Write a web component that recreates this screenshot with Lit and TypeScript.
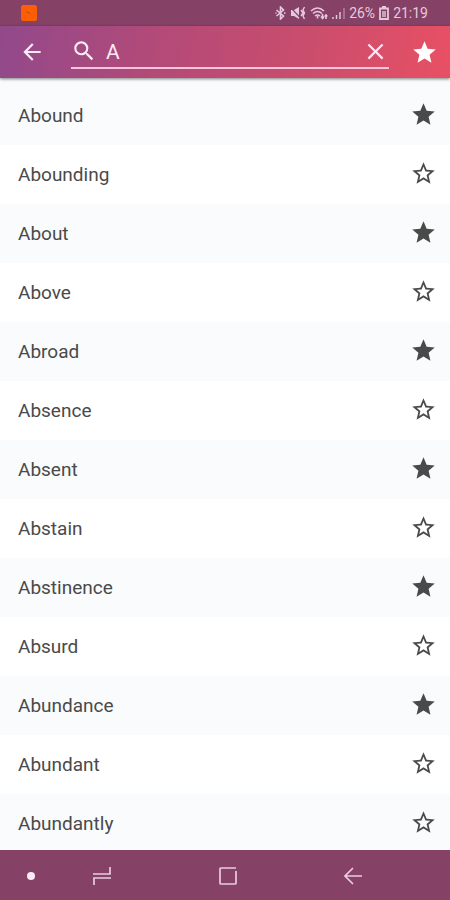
import { LitElement, html, css, svg } from "lit";
import { customElement, state } from "lit/decorators.js";

interface Word {
  name: string;
  starred: boolean;
}

const STAR =
  "M12 17.27 18.18 21l-1.64-7.03L22 9.24l-7.19-.61L12 2 9.19 8.63 2 9.24l5.46 4.73L5.82 21z";
const STAR_OUTLINE =
  "M22 9.24l-7.19-.62L12 2 9.19 8.63 2 9.24l5.46 4.73L5.82 21 12 17.27 18.18 21l-1.63-7.03L22 9.24zM12 15.4l-3.76 2.27 1-4.28-3.32-2.88 4.38-.38L12 6.1l1.71 4.04 4.38.38-3.32 2.88 1 4.28L12 15.4z";
const BACK = "M20 11H7.83l5.59-5.59L12 4l-8 8 8 8 1.41-1.41L7.83 13H20v-2z";
const SEARCH =
  "M15.5 14h-.79l-.28-.27A6.47 6.47 0 0 0 16 9.5 6.5 6.5 0 1 0 9.5 16c1.61 0 3.09-.59 4.23-1.57l.27.28v.79l5 4.99L20.49 19l-4.99-5zm-6 0C7.01 14 5 11.99 5 9.5S7.01 5 9.5 5 14 7.01 14 9.5 11.99 14 9.5 14z";
const CLOSE =
  "M19 6.41 17.59 5 12 10.59 6.41 5 5 6.41 10.59 12 5 17.59 6.41 19 12 13.41 17.59 19 19 17.59 13.41 12z";

const icon = (d: string, size: number) =>
  html`<svg class="icon" viewBox="0 0 24 24" width=${size} height=${size} aria-hidden="true">
    ${svg`<path d=${d}></path>`}
  </svg>`;

@customElement("app-root")
export class AppRoot extends LitElement {
  @state() private query = "A";

  @state() private words: Word[] = [
    { name: "Abound", starred: true },
    { name: "Abounding", starred: false },
    { name: "About", starred: true },
    { name: "Above", starred: false },
    { name: "Abroad", starred: true },
    { name: "Absence", starred: false },
    { name: "Absent", starred: true },
    { name: "Abstain", starred: false },
    { name: "Abstinence", starred: true },
    { name: "Absurd", starred: false },
    { name: "Abundance", starred: true },
    { name: "Abundant", starred: false },
    { name: "Abundantly", starred: false },
  ];

  static styles = css`
    :host {
      display: flex;
      flex-direction: column;
      height: 100vh;
      font-family: Roboto, "Liberation Sans", sans-serif;
      background: #ffffff;
      color: #4a4a4a;
    }
    * {
      box-sizing: border-box;
    }
    button {
      display: flex;
      align-items: center;
      justify-content: center;
      padding: 0;
      border: 0;
      background: none;
      color: inherit;
      font: inherit;
      cursor: pointer;
    }
    svg {
      display: block;
      flex: none;
    }
    .icon {
      fill: currentColor;
    }
    .status {
      display: flex;
      flex: none;
      align-items: center;
      justify-content: space-between;
      height: 26px;
      padding: 0 22px 0 21px;
      background: #864167;
      color: #e6c9dc;
      font-size: 14px;
      line-height: 16px;
    }
    .indicators {
      display: flex;
      align-items: center;
      gap: 4px;
    }
    .bar {
      display: flex;
      flex: none;
      align-items: center;
      height: 52px;
      padding-right: 12px;
      background: linear-gradient(100deg, #91498b 0%, #b34a78 35%, #ca4d6d 68%, #e85064 100%);
      box-shadow: 0 1px 3px rgba(0, 0, 0, 0.5);
      color: #fdeaf6;
      z-index: 1;
    }
    .back {
      width: 63px;
      height: 52px;
    }
    .search {
      display: flex;
      flex: 1;
      align-items: center;
      gap: 9px;
      min-width: 0;
      height: 34px;
      margin: 0 22px 0 8px;
      border-bottom: 2px solid #f7c6dc;
    }
    .search input {
      flex: 1;
      min-width: 0;
      padding: 2px 0 0;
      border: 0;
      outline: 0;
      background: none;
      color: inherit;
      font: 21px/24px Roboto, "Liberation Sans", sans-serif;
    }
    .favorites {
      color: #ffffff;
    }
    main {
      flex: 1;
      min-height: 0;
      overflow-y: auto;
      scrollbar-width: none;
      background: linear-gradient(#f9fbfd 8px, #ffffff 8px);
    }
    .words {
      margin: 0;
      padding: 8px 0 0;
      list-style: none;
    }
    .word {
      display: flex;
      align-items: center;
      justify-content: space-between;
      height: 59px;
      padding: 0 13px 0 18px;
      font-size: 19px;
      line-height: 24px;
    }
    .word:nth-child(odd) {
      background: #f9fbfd;
    }
    .word button {
      padding-bottom: 2px;
    }
    .nav {
      display: flex;
      flex: none;
      align-items: center;
      height: 50px;
      padding-top: 2px;
      background: #864167;
      color: #eccbe2;
    }
    .nav svg {
      fill: none;
      stroke: currentColor;
      stroke-width: 1.7;
    }
    .nav button {
      flex: 2;
      height: 48px;
    }
    .nav .pin {
      flex: none;
      width: 61px;
    }
    .nav .pin svg {
      fill: #fdeaf6;
      stroke: none;
    }
    .nav .keys {
      display: flex;
      flex: 1;
      margin: 0 34px 0 -22px;
    }
  `;

  private toggle(index: number) {
    this.words = this.words.map((w, i) => (i === index ? { ...w, starred: !w.starred } : w));
  }

  private renderStatus() {
    return html`<div class="status">
      <svg width="16" height="16" viewBox="0 0 16 16" aria-hidden="true">
        <rect width="16" height="16" rx="2" fill="#fb5e04"></rect>
        <path d="M5 6l2 2h2" fill="none" stroke="#b54a1c"></path>
      </svg>
      <div class="indicators">
        <svg width="11" height="14" viewBox="0 0 11 14" fill="none" stroke="currentColor" stroke-width="1.6" aria-hidden="true">
          <path d="M1.500 4l7 6-3 3V1l3 3-7 6"></path>
          <path d="M0.500 7h1M9 7h1.500"></path>
        </svg>
        <svg width="16" height="14" viewBox="0 0 16 14" fill="currentColor" aria-hidden="true">
          <path d="M1 4h3l5-3v12L4 10H1z"></path>
          <path d="M0 1l11 11.500" fill="none" stroke="#864167" stroke-width="1.2"></path>
          <path d="M11 4l2 3-2 3M14.500 1l-1.500 3 1.500 3-1.500 3 1.500 3" fill="none" stroke="currentColor" stroke-width="1.4"></path>
        </svg>
        <svg width="18" height="14" viewBox="0 0 18 14" fill="none" stroke="currentColor" stroke-width="1.6" aria-hidden="true">
          <path d="M1 5q6.500-6 13 0M3 7.500q4.500-4 9 0M5 10q2.500-2 5 0"></path>
          <path d="M7.500 10v2.500M12.500 8v4M11 10.500l1.500 2 1.500-2M16 13V9M14.700 10.500L16 9l1.300 1.500"></path>
        </svg>
        <svg width="13" height="14" viewBox="0 0 13 14" stroke="currentColor" stroke-width="1.4" aria-hidden="true">
          <path d="M1 13v-2M4.500 13V9M8 13V6"></path>
          <path d="M12 13V2" opacity="0.5"></path>
        </svg>
        <span>26%</span>
        <svg width="10" height="14" viewBox="0 0 10 14" fill="none" stroke="currentColor" stroke-width="1.8" aria-hidden="true">
          <path d="M1 2.500h8v10.500H1zM3 1h4"></path>
          <path d="M3 5h4v6H3z" fill="currentColor" stroke="none" opacity="0.7"></path>
        </svg>
        <span>21:19</span>
      </div>
    </div>`;
  }

  render() {
    return html`
      ${this.renderStatus()}
      <header class="bar">
        <button class="back" aria-label="Back">${icon(BACK, 26)}</button>
        <label class="search">
          ${icon(SEARCH, 26)}
          <input
            type="text"
            aria-label="Search words"
            .value=${this.query}
            @input=${(e: Event) => (this.query = (e.target as HTMLInputElement).value)}
          />
          <button aria-label="Clear" @click=${() => (this.query = "")}>${icon(CLOSE, 27)}</button>
        </label>
        <button class="favorites" aria-label="Favorites">${icon(STAR, 27)}</button>
      </header>
      <main>
        <ul class="words">
          ${this.words.map(
            (w, i) => html`<li class="word">
              <span>${w.name}</span>
              <button
                aria-label="Favorite ${w.name}"
                aria-pressed=${w.starred ? "true" : "false"}
                @click=${() => this.toggle(i)}
              >
                ${icon(w.starred ? STAR : STAR_OUTLINE, 27)}
              </button>
            </li>`
          )}
        </ul>
      </main>
      <nav class="nav" aria-label="System">
        <button class="pin" aria-label="Pin">
          <svg width="8" height="8" viewBox="0 0 8 8"><circle cx="4" cy="4" r="4"></circle></svg>
        </button>
        <div class="keys">
          <button aria-label="Recent apps">
            <svg width="18" height="20" viewBox="0 0 18 20"><path d="M17 1v7H0M1 19v-7h17"></path></svg>
          </button>
          <button aria-label="Home">
            <svg width="18" height="18" viewBox="0 0 18 18"><path d="M17 1H2Q1 1 1 2V16Q1 17 2 17H16Q17 17 17 16V4"></path></svg>
          </button>
          <button aria-label="Go back">
            <svg width="18" height="18" viewBox="0 0 18 18"><path d="M9 1L1 9l8 8M1 9h17"></path></svg>
          </button>
        </div>
      </nav>
    `;
  }
}
